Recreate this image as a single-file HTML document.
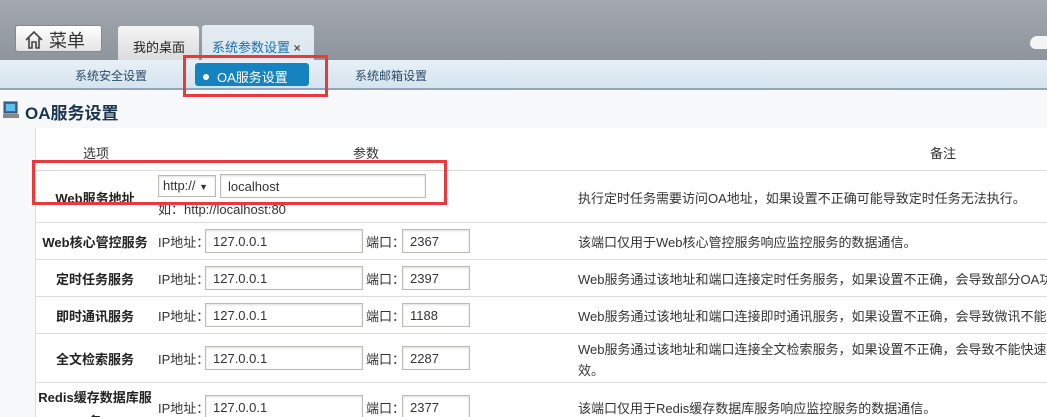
<!DOCTYPE html>
<html><head><meta charset="utf-8"><style>
*{margin:0;padding:0;box-sizing:border-box}
html{width:1047px;height:417px;overflow:hidden}
body{width:1047px;height:417px;overflow:hidden;background:#f7f8fa;font-family:"Liberation Sans","Noto Sans CJK SC",sans-serif;font-size:12px;color:#222;position:relative}
.a{position:absolute}
.top{left:0;top:0;width:1047px;height:60px;background:linear-gradient(#a4a8b0,#8e959d)}
.sub{left:0;top:60px;width:1047px;height:30px;background:linear-gradient(#e6f0f6,#d6e4ee);border-bottom:2px solid #8fa6bc}
.panel{left:35px;top:128px;width:1012px;height:289px;background:#fff;border-left:1px solid #dcdcdc}
.hl{left:35px;height:1px;width:1012px;background:#dcdcdc}
.in{height:24px;border:1px solid #bdbab4;background:#fff;font-size:13px;color:#333;padding:5px 0 0 7px;line-height:14px;box-shadow:inset 0 1px 2px #ddd}
.lbl{font-weight:bold;font-size:13px;width:130px;text-align:center;left:30px}
.t{font-size:13px;color:#333;white-space:nowrap}
.red{border:3px solid #e83a3a}
</style></head><body>
<div class="a top"></div>
<div class="a" style="left:15px;top:25px;width:87px;height:27px;background:linear-gradient(#fff,#e4e4e4);border:1px solid #888;border-radius:3px;font-size:18px;padding:1px 0 0 8px;color:#333">
<svg width="20" height="20" viewBox="0 0 20 20" style="vertical-align:-3px"><path d="M2 10 L10 2 L18 10 M5 8 V18 H8 V12 H12 V18 H15 V8" fill="none" stroke="#444" stroke-width="1.6"/></svg> 菜单</div>
<div class="a" style="left:118px;top:26px;width:81px;height:34px;background:linear-gradient(#f4f4f4,#dcdcdc);border-radius:3px 3px 0 0;font-size:13px;padding:11px 0 0 15px;color:#222">我的桌面</div>
<div class="a" style="left:202px;top:25px;width:112px;height:35px;background:linear-gradient(#e4ecf2,#dbe6ef);border-radius:3px 3px 0 0;font-size:13px;padding:12px 0 0 10px;color:#1c6fa6">系统参数设置 <b style="color:#555;font-size:12px">×</b></div>
<div class="a" style="left:1030px;top:36px;width:17px;height:13px;background:#f4f4f4;border-radius:8px 0 0 6px"></div>
<div class="a sub"></div>
<div class="a t" style="left:75px;top:67px;font-size:12px;color:#2a4a66">系统安全设置</div>
<div class="a" style="left:195px;top:63px;width:114px;height:23px;background:#1483c0;border-radius:3px;color:#fff;font-size:13px;padding:4px 0 0 8px"><span style="display:inline-block;width:6px;height:6px;background:#fff;border-radius:3px;vertical-align:2px;margin-right:8px"></span>OA服务设置</div>
<div class="a red" style="left:183px;top:55px;width:145px;height:42px"></div>
<div class="a t" style="left:355px;top:67px;font-size:12px;color:#2a4a66">系统邮箱设置</div>
<svg class="a" style="left:3px;top:101px" width="16" height="18"><rect x="1" y="1" width="13" height="11" fill="#2b6fc0" stroke="#444"/><rect x="3" y="3" width="9" height="7" fill="#5ac0f0"/><rect x="0" y="13" width="16" height="4" fill="#888"/></svg>
<div class="a" style="left:25px;top:99px;font-size:17px;font-weight:bold;color:#1a3550">OA服务设置</div>
<div class="a panel"></div>
<div class="a t" style="left:83px;top:143px">选项</div>
<div class="a t" style="left:353px;top:143px">参数</div>
<div class="a t" style="left:930px;top:143px">备注</div>
<div class="a hl" style="top:170px"></div>
<div class="a hl" style="top:222px"></div>
<div class="a hl" style="top:259px"></div>
<div class="a hl" style="top:296px"></div>
<div class="a hl" style="top:333px"></div>
<div class="a hl" style="top:382px"></div>
<div class="a lbl" style="top:188px">Web服务地址</div>
<div class="a in" style="left:158px;top:175px;width:58px;height:22px;padding:3px 0 0 4px">http:// <span style="font-size:9px">▼</span></div>
<div class="a in" style="left:220px;top:174px;width:206px">localhost</div>
<div class="a t" style="left:158px;top:199px">如：http://localhost:80</div>
<div class="a red" style="left:32px;top:160px;width:415px;height:45px"></div>
<div class="a t" style="left:578px;top:188px">执行定时任务需要访问OA地址，如果设置不正确可能导致定时任务无法执行。</div>
<div class="a lbl" style="top:232px">Web核心管控服务</div>
<div class="a lbl" style="top:269px">定时任务服务</div>
<div class="a lbl" style="top:306px">即时通讯服务</div>
<div class="a lbl" style="top:349px">全文检索服务</div>
<div class="a lbl" style="top:386px;line-height:24px;height:31px;overflow:hidden">Redis缓存数据库服<br>务</div>
<div class="a t" style="left:158px;top:232px">IP地址：</div><div class="a in" style="left:205px;top:229px;width:158px">127.0.0.1</div><div class="a t" style="left:366px;top:232px">端口：</div><div class="a in" style="left:402px;top:229px;width:68px">2367</div>
<div class="a t" style="left:158px;top:269px">IP地址：</div><div class="a in" style="left:205px;top:266px;width:158px">127.0.0.1</div><div class="a t" style="left:366px;top:269px">端口：</div><div class="a in" style="left:402px;top:266px;width:68px">2397</div>
<div class="a t" style="left:158px;top:306px">IP地址：</div><div class="a in" style="left:205px;top:303px;width:158px">127.0.0.1</div><div class="a t" style="left:366px;top:306px">端口：</div><div class="a in" style="left:402px;top:303px;width:68px">1188</div>
<div class="a t" style="left:158px;top:349px">IP地址：</div><div class="a in" style="left:205px;top:346px;width:158px">127.0.0.1</div><div class="a t" style="left:366px;top:349px">端口：</div><div class="a in" style="left:402px;top:346px;width:68px">2287</div>
<div class="a t" style="left:158px;top:398px">IP地址：</div><div class="a in" style="left:205px;top:395px;width:158px">127.0.0.1</div><div class="a t" style="left:366px;top:398px">端口：</div><div class="a in" style="left:402px;top:395px;width:68px">2377</div>
<div class="a t" style="left:578px;top:232px">该端口仅用于Web核心管控服务响应监控服务的数据通信。</div>
<div class="a t" style="left:578px;top:269px">Web服务通过该地址和端口连接定时任务服务，如果设置不正确，会导致部分OA功能不能正常使用。</div>
<div class="a t" style="left:578px;top:306px">Web服务通过该地址和端口连接即时通讯服务，如果设置不正确，会导致微讯不能及时提醒。</div>
<div class="a t" style="left:578px;top:339px">Web服务通过该地址和端口连接全文检索服务，如果设置不正确，会导致不能快速预览OA文档失</div>
<div class="a t" style="left:578px;top:360px">效。</div>
<div class="a t" style="left:578px;top:398px">该端口仅用于Redis缓存数据库服务响应监控服务的数据通信。</div>
</body></html>
